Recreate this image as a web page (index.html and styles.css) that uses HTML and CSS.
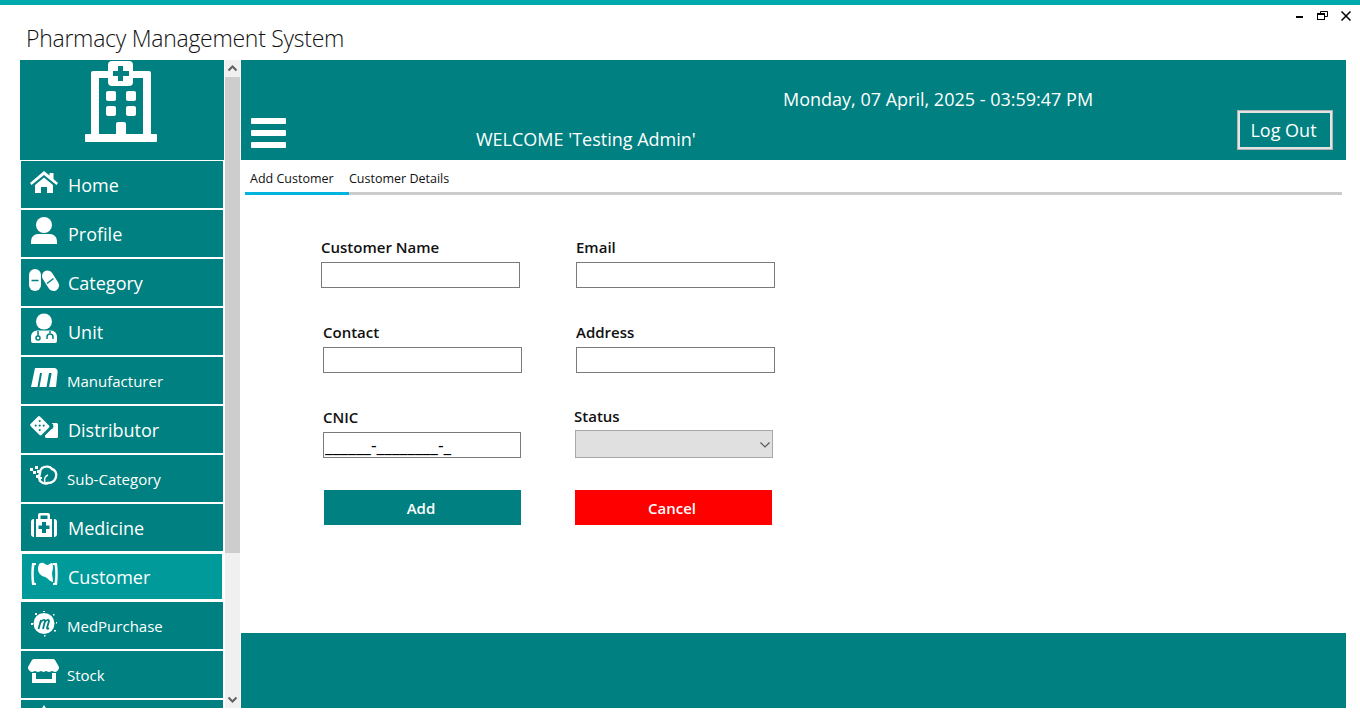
FILE: index.html
```html
<!DOCTYPE html>
<html lang="en">

<head>
  <meta charset='utf-8'>
  <title>Pharmacy Management System</title>
  <meta name='viewport' content='width=device-width, initial-scale=1'>
  <link rel="stylesheet" href="styles.css">
</head>

<body>
  <div id="topStrip"></div>
  <div id="titleBar">
    <h1 id="title">Pharmacy Management System</h1>
    <div id="winBtns">
      <svg width="8" height="8" viewBox="0 0 8 8"><rect x="0" y="5" width="7" height="2" fill="#000"/></svg>
      <svg width="11" height="10" viewBox="0 0 11 10" fill="none" stroke="#000"><path d="M3.500 2.500V.5h7v5H8"/><rect x=".5" y="2.500" width="7" height="6"/><path d="M1 3h6" stroke-width="2"/></svg>
      <svg width="10" height="10" viewBox="0 0 10 10" fill="none" stroke="#000" stroke-width="1.500"><path d="M.5.5l9 9M9.500.5l-9 9"/></svg>
    </div>
  </div>

  <div id="mainCont">
    <div id="sidebar">
      <div id="sideScroll">
        <div id="logo">
          <svg width="72" height="82" viewBox="0 0 72 82" fill="#fff">
            <rect x="0" y="74" width="72" height="8" rx="1"/>
            <path d="M8 11h17v7H14v56H6V13a2 2 0 0 1 2-2zM47 11h17a2 2 0 0 1 2 2v61h-8V18H47z"/>
            <path fill-rule="evenodd" d="M27 1h17a4 4 0 0 1 4 4v17a4 4 0 0 1-4 4H27a4 4 0 0 1-4-4V5a4 4 0 0 1 4-4zm6 5v5h-5v5h5v5h5v-5h6v-5h-6V6z"/>
            <rect x="21" y="31" width="10" height="10" rx="2"/><rect x="41" y="31" width="10" height="10" rx="2"/>
            <rect x="21" y="46" width="10" height="10" rx="2"/><rect x="41" y="46" width="10" height="10" rx="2"/>
            <path d="M31 64a2 2 0 0 1 2-2h6a2 2 0 0 1 2 2v10H31z"/>
          </svg>
        </div>
        <a class="item">
          <svg class="ico" viewBox="0 0 28 28" fill="#fff"><path d="M14 1 0 13l1.500 2L14 5l12.500 10 1.500-2-4.500-4V3h-4v2.500z"/><path d="M5 15l9-7.500 9 7.500v8h-6v-6h-6v6H5z"/></svg>
          <span>Home</span>
        </a>
        <a class="item">
          <svg class="ico tall" viewBox="0 0 28 32" fill="#fff"><circle cx="14" cy="10" r="8"/><path d="M1 29v-3a7 7 0 0 1 7-7h12a7 7 0 0 1 7 7v3z"/></svg>
          <span>Profile</span>
        </a>
        <a class="item">
          <svg class="ico" viewBox="0 0 28 28" fill="#fff">
            <path d="M-1 7a6 6 0 0 1 12 0v10a6 6 0 0 1-12 0z"/>
            <path d="M1.500 12.500h7" stroke="#008080" stroke-width="1.500"/>
            <path d="M17.500 8 23.500 17.500" stroke="#fff" stroke-width="11" stroke-linecap="round"/>
            <path d="M17 15.500 23.500 10.500" stroke="#008080" stroke-width="1.500"/>
          </svg>
          <span>Category</span>
        </a>
        <a class="item">
          <svg class="ico tall" viewBox="0 0 28 32" fill="#fff">
            <circle cx="14" cy="8.500" r="8"/>
            <path d="M7 17.500h14a6 6 0 0 1 6 6V28a2 2 0 0 1-2 2H3a2 2 0 0 1-2-2v-4.500a6 6 0 0 1 6-6z"/>
            <g fill="none" stroke="#008080" stroke-width="1.500"><circle cx="8" cy="25" r="2"/><path d="M8 23v-5M20 18v2M17 26v-2a3 3 0 0 1 6 0v2"/></g>
          </svg>
          <span>Unit</span>
        </a>
        <a class="item small">
          <svg class="ico" viewBox="0 0 28 28" fill="#fff"><path d="M5 2h18c4 0 5 2 4.500 5L26 21h-7l2.500-13c.1-1-.3-1-1-1H19L16.500 21h-7L12 7h-2L7.500 21H1z"/></svg>
          <span>Manufacturer</span>
        </a>
        <a class="item">
          <svg class="ico" viewBox="0 0 28 28" fill="#fff">
            <path fill-rule="evenodd" d="M10 1.500 19 10.500a1.500 1.500 0 0 1 0 2l-7.500 7.500a1.500 1.500 0 0 1-2 0L.5 11a1.500 1.500 0 0 1 0-2L8 1.500a1.500 1.500 0 0 1 2 0zM9.700 5a1 1 0 1 0 .1 0zM5.700 9.500a1 1 0 1 0 .1 0zm8 0a1 1 0 1 0 .1 0zm-4 0a1 1 0 1 0 .1 0zm0 4.500a1 1 0 1 0 .1 0z"/>
            <path d="M21.500 8h5a1.500 1.500 0 0 1 1.500 1.500V21.500a1.500 1.500 0 0 1-1.500 1.500H16.500A1.500 1.500 0 0 1 15 21.500v-1l6-6a3.500 3.500 0 0 0 .5-6.500z"/>
          </svg>
          <span>Distributor</span>
        </a>
        <a class="item small">
          <svg class="ico" viewBox="0 0 28 28" fill="none" stroke="#fff" stroke-width="2.400">
            <path d="M12 4c3-2 8-2 10 1 3 1 5 4 4 8-1 4-4 6-8 6-3 1-6 0-8-2-1-3-1-6 0-8 0-2 1-4 2-5z"/>
            <path d="M15 18c-1-3 0-6 3-7" stroke-width="1.500"/>
            <g fill="#fff" stroke="none"><rect x="0" y="4" width="3" height="3"/><rect x="5" y="2" width="3" height="3"/><rect x="3" y="7" width="3" height="3"/><rect x="7" y="6" width="3" height="3"/><rect x="6" y="11" width="3" height="3"/><rect x="10" y="13" width="2" height="2"/></g>
          </svg>
          <span>Sub-Category</span>
        </a>
        <a class="item">
          <svg class="ico" viewBox="0 0 28 28" fill="#fff">
            <path fill-rule="evenodd" d="M10 0h8a2 2 0 0 1 2 2v4h2v18H6V6h2V2a2 2 0 0 1 2-2zm.500 2.500V6h7V2.500zM12 9v3.500H8.500v3.500H12v4h4v-4h3.500v-3.500H16V9z"/>
            <path d="M1 9a3 3 0 0 1 3-3v18a3 3 0 0 1-3-3zM27 9a3 3 0 0 0-3-3v18a3 3 0 0 0 3-3z"/>
          </svg>
          <span>Medicine</span>
        </a>
        <a class="item active">
          <svg class="ico" viewBox="0 0 28 28" fill="#fff">
            <path d="M2 1h4v2H4.500C3.500 8 3.500 16 4.500 21H6v2H2C1 16 1 8 2 1zM23 1h4c1 7 1 15 0 22h-4v-2h1.500c1-5 1-13 0-18H23z"/>
            <path d="M11 1c3-1 4 2 6 2s3-2 5-2c1 0 1 3 1 5l-1 5c0 3 1 5 1 9-3 0-5-4-8-5-4-1-7-4-7-8 0-3 1-6 3-6z"/>
          </svg>
          <span>Customer</span>
        </a>
        <a class="item small">
          <svg class="ico" viewBox="0 0 28 28" fill="#fff">
            <circle cx="14" cy="12.500" r="10.500"/>
            <path d="M8.500 18l2.500-9M11 11c1-2 4-3 4-1l-2 8M15 11c1-2 4-3 4-1l-2 7c0 1 1 1 2 0" fill="none" stroke="#008080" stroke-width="1.800"/>
            <path d="M1 12h2v2H1zM5 2h2v2H5zM13 0h2v1h-2zM23 3h1.500v1.500H23zM26 11h1v1.500h-1zM24 19h2v1.500h-2zM14 24h1.500v1.500H14z"/>
          </svg>
          <span>MedPurchase</span>
        </a>
        <a class="item small">
          <svg class="ico wide" viewBox="0 0 30 30" fill="#fff">
            <path d="M6 0h18a3 3 0 0 1 2 1l4 7a4.500 4.500 0 0 1-4 5c-1.500 0-2-1-3-1s-1.500 1-3 1-2-1-3-1-1.500 1-2.500 1-1.500-1-2.500-1-1.500 1-3 1-2-1-3-1-1.500 1-3 1a4.500 4.500 0 0 1-4-5l4-7a3 3 0 0 1 2-1z"/>
            <path d="M3 14h4v6h16v-6h4v10H3z"/>
          </svg>
          <span>Stock</span>
        </a>
        <a class="item">
          <svg class="ico peek" viewBox="0 0 28 28" fill="#fff"><path d="M14 2l3 5 9 3v10H2V10l9-3z"/></svg>
        </a>
      </div>
      <div id="scrollBar">
        <svg class="arrow" width="15" height="17" viewBox="0 0 15 17" fill="none" stroke="#606060" stroke-width="2"><path d="M3.500 10.500l4-4 4 4"/></svg>
        <div id="thumb"></div>
        <svg class="arrow bottom" width="15" height="17" viewBox="0 0 15 17" fill="none" stroke="#606060" stroke-width="2"><path d="M3.500 6.500l4 4 4-4"/></svg>
      </div>
    </div>

    <div id="content">
      <div id="header">
        <div id="dateRow">Monday, 07 April, 2025 - 03:59:47 PM</div>
        <div id="headRow">
          <div id="burger"><i></i><i></i><i></i></div>
          <div id="welcome">WELCOME 'Testing Admin'</div>
          <button id="logout">Log Out</button>
        </div>
      </div>

      <div id="tabs">
        <a class="tab on">Add Customer</a>
        <a class="tab">Customer Details</a>
      </div>

      <form id="form">
        <div class="row rowOne">
          <div class="field"><label>Customer Name</label><input type="text"></div>
          <div class="field"><label>Email</label><input type="text"></div>
        </div>
        <div class="row rowTwo">
          <div class="field"><label>Contact</label><input type="text"></div>
          <div class="field"><label>Address</label><input type="text"></div>
        </div>
        <div class="row rowThree">
          <div class="field"><label>CNIC</label><input type="text" value="______-________-_"></div>
          <div class="field statusField">
            <label>Status</label>
            <div class="selectWrap">
              <select></select>
              <svg width="10" height="6" viewBox="0 0 10 6" fill="none" stroke="#555" stroke-width="1.200"><path d="M.5.5l4.500 4.500 4.500-4.500"/></svg>
            </div>
          </div>
        </div>
        <div class="row rowBtns">
          <button type="button" class="btn add">Add</button>
          <button type="button" class="btn cancel">Cancel</button>
        </div>
      </form>

      <div id="footer"></div>
    </div>
  </div>
</body>

</html>
```

FILE: styles.css
```css
* {
  box-sizing: border-box;
  font-family: "Open Sans", "Noto Sans", sans-serif;
}

html, body {
  height: 100%;
}

body {
  margin: 0;
  background-color: #fff;
  color: #000;
  overflow: hidden;
}

#topStrip {
  height: 5px;
  background-color: #00a9ac;
}

#titleBar {
  height: 55px;
  padding-left: 26px;
  display: flex;
  justify-content: space-between;
}

#title {
  margin: 16px 0 0;
  font-size: 23px;
  letter-spacing: -.27px;
  line-height: 34px;
  font-weight: 300;
  color: #111;
}

#winBtns {
  display: flex;
  align-items: flex-start;
  gap: 13px;
  padding: 6px 9px 0 0;
}

#mainCont {
  height: 648px;
  display: flex;
}

#sidebar {
  margin-left: 20px;
  width: 221px;
  display: flex;
}

#sideScroll {
  width: 204px;
  overflow: hidden;
  display: flex;
  flex-direction: column;
}

#logo {
  height: 100px;
  flex-shrink: 0;
  margin-bottom: 1px;
  background-color: #008080;
  padding-left: 65px;
}

.item {
  height: 47px;
  flex-shrink: 0;
  margin: 0 1px 2px;
  background-color: #008080;
  color: #fff;
  display: flex;
  align-items: flex-start;
  font-size: 18px;
  line-height: 49px;
  padding-left: 9px;
}

.item span {
  margin-left: 10px;
}

.item.small {
  font-size: 15px;
}

.item.small span {
  margin-left: 9px;
}

.item.active {
  height: 45px;
  margin: 1px 2px 3px;
  padding-left: 8px;
  line-height: 47px;
  background-color: #009a9a;
}

.ico {
  width: 28px;
  height: 28px;
  margin-top: 9px;
  flex-shrink: 0;
  overflow: visible;
}

.item.active .ico {
  margin-top: 8px;
}

.ico.tall {
  height: 32px;
  margin-top: 5px;
}

.ico.wide {
  width: 30px;
  height: 30px;
  margin: 8px -1px 0;
}

.ico.peek {
  margin-top: 3px;
}

#scrollBar {
  width: 15px;
  margin-left: 1px;
  background-color: #f0f0f0;
  display: flex;
  flex-direction: column;
}

.arrow.bottom {
  margin-top: auto;
}

#thumb {
  height: 476px;
  background-color: #cdcdcd;
}

#content {
  width: 1105px;
  display: flex;
  flex-direction: column;
}

#header {
  height: 100px;
  background-color: #008080;
  color: #fff;
  display: flex;
  flex-direction: column;
}

#dateRow {
  padding: 27px 0 0 542px;
  font-size: 18px;
  line-height: 24px;
  height: 50px;
}

#headRow {
  height: 50px;
  display: flex;
  align-items: flex-start;
}

#burger {
  width: 35px;
  margin: 8px 0 0 10px;
  display: flex;
  flex-direction: column;
  gap: 6px;
}

#burger i {
  display: block;
  height: 6px;
  border-radius: 1px;
  background-color: #fff;
}

#welcome {
  margin: 17px 0 0 190px;
  font-size: 18px;
  line-height: 24px;
}

#logout {
  margin: 0 13px 0 auto;
  width: 96px;
  height: 40px;
  background-color: transparent;
  border: 3px solid #e4e4e4;
  outline: 1px solid #b4b4b4;
  outline-offset: -1px;
  color: #fff;
  font-size: 18px;
  padding: 0 3px 0 0;
}

#tabs {
  height: 35px;
  margin: 0 4px;
  display: flex;
  border-bottom: 3px solid #ccc;
}

.tab {
  height: 35px;
  padding: 10px 0 0;
  font-size: 12.5px;
  line-height: 18px;
  color: #111;
  white-space: nowrap;
}

.tab:first-child {
  width: 104px;
  padding-left: 5px;
}

.tab.on {
  border-bottom: 3px solid #00b4e0;
}

#form {
  flex: 1;
  padding: 43px 0 0 80px;
}

.row {
  display: flex;
}

.field {
  width: 199px;
  height: 85px;
}

.field label {
  display: block;
  font-size: 15px;
  line-height: 18px;
  font-weight: 600;
  color: #111;
  height: 21px;
  margin-bottom: 3px;
}

.field input {
  display: block;
  width: 100%;
  height: 26px;
  border: 1px solid #7a7a7a;
  border-radius: 0;
  padding: 0 2px 0 1px;
  font-size: 17.5px;
  background-color: #fff;
  color: #000;
}

.rowOne .field + .field {
  margin-left: 56px;
}

.rowTwo {
  padding-left: 2px;
}

.rowTwo .field + .field {
  margin-left: 54px;
}

.rowThree {
  padding-left: 2px;
}

.rowThree .field {
  width: 198px;
  height: 82px;
}

.rowThree .field + .field {
  margin-left: 54px;
}

.statusField label {
  height: 20px;
  margin: -1px 0 3px -1px;
}

.selectWrap {
  position: relative;
  height: 28px;
}

.selectWrap select {
  display: block;
  appearance: none;
  width: 100%;
  height: 28px;
  background-color: #e0e0e0;
  border: 1px solid #a9a9a9;
  border-radius: 0;
}

.selectWrap svg {
  position: absolute;
  right: 3px;
  top: 12px;
}

.rowBtns {
  padding-left: 3px;
  gap: 54px;
}

.btn {
  width: 197px;
  height: 35px;
  border: 0;
  padding: 0 3px 0 0;
  color: #fff;
  font-size: 15px;
  font-weight: 600;
}

.btn.add {
  background-color: #008080;
}

.btn.cancel {
  background-color: #f00;
}

#footer {
  height: 75px;
  background-color: #008080;
}
```
